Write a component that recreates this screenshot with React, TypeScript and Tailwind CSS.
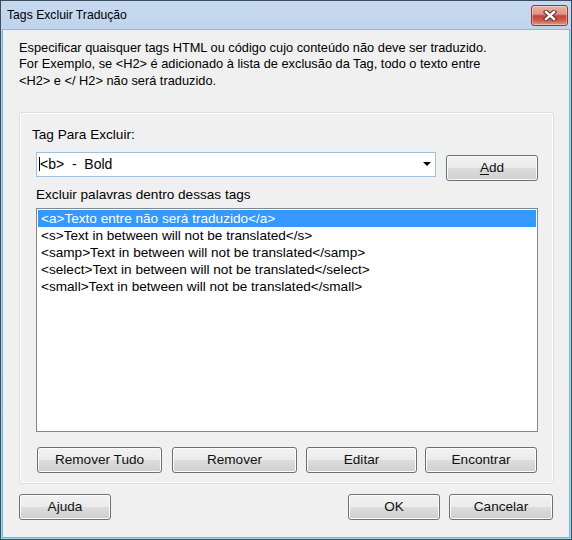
import React from "react";

function Btn({ className = "", children }: { className?: string; children: React.ReactNode }) {
  return (
    <div
      className={
        "flex h-[26px] shrink-0 items-center justify-center rounded-[3px] border border-[#707070] bg-[linear-gradient(to_bottom,#f2f2f2_0%,#ebebeb_50%,#dddddd_50%,#cfcfcf_100%)] text-[13.6px] leading-none text-[#111] shadow-[inset_0_0_0_1px_#fcfcfc] " +
        className
      }
    >
      {children}
    </div>
  );
}

const items = [
  "<a>Texto entre não será traduzido</a>",
  "<s>Text in between will not be translated</s>",
  "<samp>Text in between will not be translated</samp>",
  "<select>Text in between will not be translated</select>",
  "<small>Text in between will not be translated</small>",
];

export default function App() {
  return (
    <div className="flex h-[540px] w-[572px] flex-col border border-[#3e4d5e] bg-[linear-gradient(to_bottom,#c6d9ef_0%,#b9d0ea_10%,#b7cfe9_70%,#9fd9ee_100%)] font-['Liberation_Sans',Arial,sans-serif] text-black">
      {/* title bar */}
      <div className="flex h-[28px] shrink-0 items-start justify-between">
        <div className="pl-[6px] pt-[7px] text-[12.2px] leading-[14px] text-black">Tags Excluir Tradução</div>
        <div className="mr-[3px] mt-[4px] flex h-[21px] w-[37px] items-center justify-center rounded-[3px] border border-[#8b3b31] bg-[linear-gradient(to_bottom,#eab0a4_0%,#df9789_42%,#c4453a_52%,#cc5a4c_75%,#e39a8b_100%)] shadow-[inset_0_0_0_1px_rgba(255,255,255,0.35)]">
          <svg width="14" height="11" viewBox="0 0 14 11">
            <path d="M3 2 L11 9 M11 2 L3 9" stroke="#5a2e28" strokeWidth="4.4" strokeLinecap="square" />
            <path d="M3 2 L11 9 M11 2 L3 9" stroke="#ffffff" strokeWidth="2.4" strokeLinecap="square" />
          </svg>
        </div>
      </div>

      {/* content panel */}
      <div className="mx-px mb-px flex flex-1 flex-col border border-t-[#9fb3c8] border-x-[#62bfe0] border-b-[#4fc3e6] bg-[#f0f0f0]">
        <p className="pl-[16px] pt-[10px] text-[12.8px] leading-[16.3px]">
          Especificar quaisquer tags HTML ou código cujo conteúdo não deve ser traduzido.
          <br />
          For Exemplo, se &lt;H2&gt; é adicionado à lista de exclusão da Tag, todo o texto entre
          <br />
          &lt;H2&gt; e &lt;/ H2&gt; não será traduzido.
        </p>

        {/* group box */}
        <div className="ml-[16px] mt-[23px] flex h-[372px] w-[535px] flex-col rounded-[3px] border border-[#d5dfe5] pl-[16px] pt-[14px] shadow-[inset_0_0_0_1px_#ffffff]">
          <div className="-ml-[4px] h-[16px] text-[13.6px] leading-[16px]">Tag Para Excluir:</div>

          <div className="mt-[9px] flex items-start">
            <div className="flex h-[25px] w-[400px] items-center justify-between border border-[#9fc0e2] bg-white pl-[2px] pr-[4px]">
              <div className="flex items-center">
                <span className="h-[14px] w-px bg-black" />
                <span className="whitespace-pre text-[14px] leading-none">{"<b>  -  Bold"}</span>
              </div>
              <svg width="8" height="4" viewBox="0 0 8 4">
                <polygon points="0,0 8,0 4,4" fill="#000" />
              </svg>
            </div>
            <Btn className="ml-[10px] mt-[3px] w-[92px]">
              <span>
                <span className="underline underline-offset-[2px]">A</span>dd
              </span>
            </Btn>
          </div>

          <div className="mt-[6px] h-[16px] text-[13.6px] leading-[16px]">Excluir palavras dentro dessas tags</div>

          <div className="mt-[5px] h-[224px] w-[502px] border border-[#828790] bg-white p-px">
            {items.map((t, i) => (
              <div
                key={i}
                className={
                  i === 0
                    ? "flex h-[17px] items-center bg-[#3399ff] pl-[3px] text-[13.6px] leading-none text-white"
                    : "flex h-[17px] items-center pl-[3px] text-[13.6px] leading-none text-black"
                }
              >
                {t}
              </div>
            ))}
          </div>

          <div className="ml-px mt-[15px] flex">
            <Btn className="w-[125px]">Remover Tudo</Btn>
            <Btn className="ml-[10px] w-[125px]">Remover</Btn>
            <Btn className="ml-[9px] w-[111px]">Editar</Btn>
            <Btn className="ml-[8px] w-[112px]">Encontrar</Btn>
          </div>
        </div>

        {/* footer */}
        <div className="mt-[10px] flex justify-between pl-[16px] pr-[16px]">
          <Btn className="w-[92px]">Ajuda</Btn>
          <div className="flex">
            <Btn className="w-[92px]">OK</Btn>
            <Btn className="ml-[9px] w-[104px]">Cancelar</Btn>
          </div>
        </div>
      </div>
    </div>
  );
}
